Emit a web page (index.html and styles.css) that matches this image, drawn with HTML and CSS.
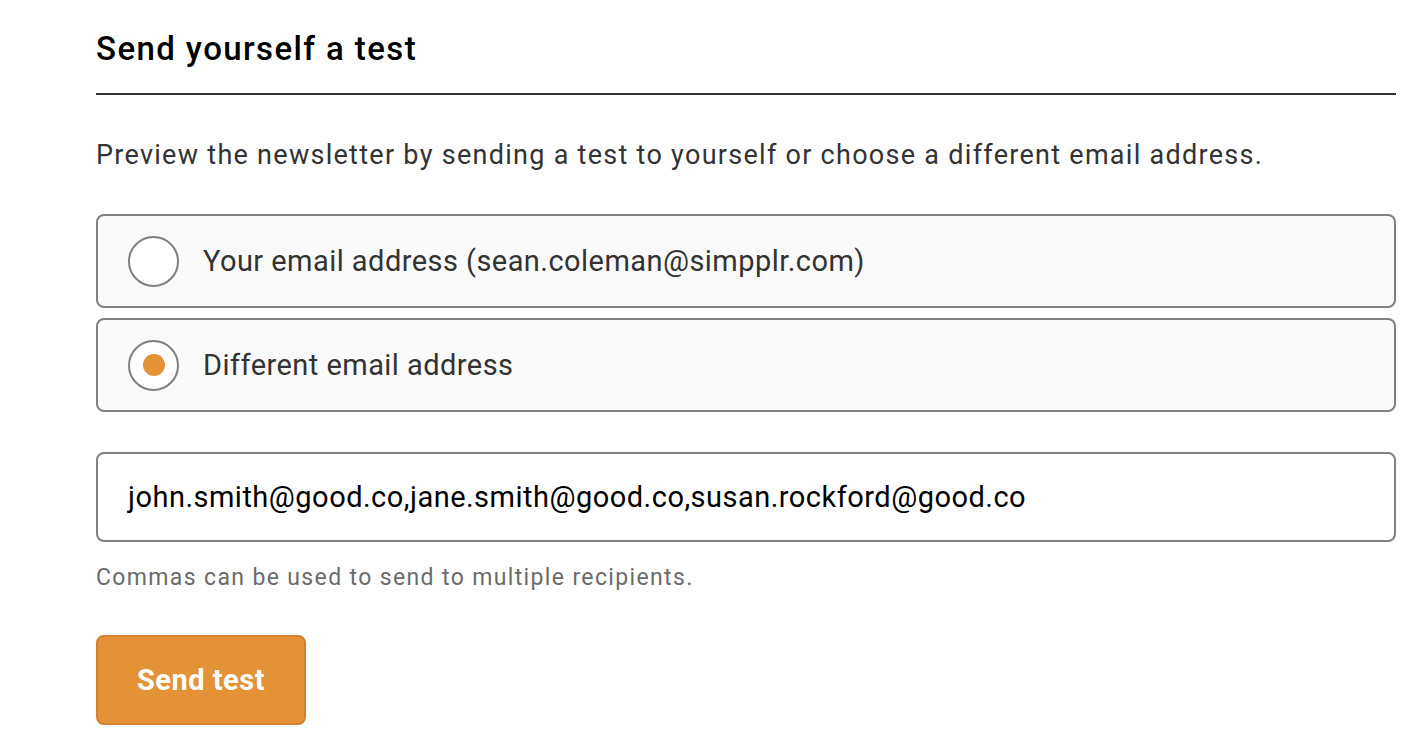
FILE: index.html
```html
<!DOCTYPE html>
<html>
<head>
<meta charset="utf-8">
<link rel="stylesheet" href="styles.css">
</head>
<body>
<main class="panel">
  <h2 class="title">Send yourself a test</h2>
  <p class="intro">Preview the newsletter by sending a test to yourself or choose a different email address.</p>
  <div class="options">
    <label class="option">
      <span class="radio"></span>
      <span class="option-label">Your email address (sean.coleman@simpplr.com)</span>
    </label>
    <label class="option">
      <span class="radio checked"><span class="dot"></span></span>
      <span class="option-label">Different email address</span>
    </label>
  </div>
  <div class="field">john.smith@good.co,jane.smith@good.co,susan.rockford@good.co</div>
  <p class="hint">Commas can be used to send to multiple recipients.</p>
  <button class="send">Send test</button>
</main>
</body>
</html>
```
FILE: styles.css
```css
html, body {
  margin: 0;
  padding: 0;
  background: #fff;
}
body {
  font-family: Roboto, "Liberation Sans", sans-serif;
  color: #333;
}
.panel {
  width: 1300px;
  margin-left: 96px;
  display: flex;
  flex-direction: column;
}
.title {
  margin: 0;
  padding-top: 26px;
  padding-bottom: 21px;
  font-size: 33px;
  line-height: 46px;
  font-weight: 500;
  letter-spacing: 1.4px;
  color: #000;
  border-bottom: 2px solid #333;
}
.intro {
  margin: 40px 0 0;
  font-size: 27px;
  line-height: 40px;
  letter-spacing: 1.28px;
}
.options {
  margin-top: 39px;
  display: flex;
  flex-direction: column;
  gap: 10px;
}
.option {
  box-sizing: border-box;
  height: 94px;
  display: flex;
  align-items: center;
  gap: 24px;
  padding-left: 30px;
  border: 2px solid #808080;
  border-radius: 8px;
  background: #fafafa;
}
.radio {
  box-sizing: border-box;
  width: 51px;
  height: 51px;
  border: 2px solid #808080;
  border-radius: 50%;
  background: #fff;
  display: flex;
  align-items: center;
  justify-content: center;
}
.dot {
  width: 22px;
  height: 22px;
  border-radius: 50%;
  background: #e39335;
}
.option-label {
  font-size: 29px;
  letter-spacing: 0.45px;
  color: #333;
}
.field {
  box-sizing: border-box;
  margin-top: 40px;
  height: 90px;
  border: 2px solid #808080;
  border-radius: 8px;
  background: #fff;
  display: flex;
  align-items: center;
  padding-left: 30px;
  font-size: 29px;
  letter-spacing: 0.48px;
  color: #000;
}
.hint {
  margin: 21px 0 0;
  font-size: 23px;
  line-height: 30px;
  letter-spacing: 1.36px;
  color: #6b6b6b;
}
.send {
  margin-top: 42px;
  align-self: flex-start;
  box-sizing: border-box;
  width: 210px;
  height: 90px;
  background: #e39335;
  border: 2px solid #d3812c;
  border-radius: 8px;
  color: #fff;
  font-family: Roboto, "Liberation Sans", sans-serif;
  font-size: 29px;
  font-weight: 700;
  letter-spacing: 0.5px;
  padding: 0;
}
```
